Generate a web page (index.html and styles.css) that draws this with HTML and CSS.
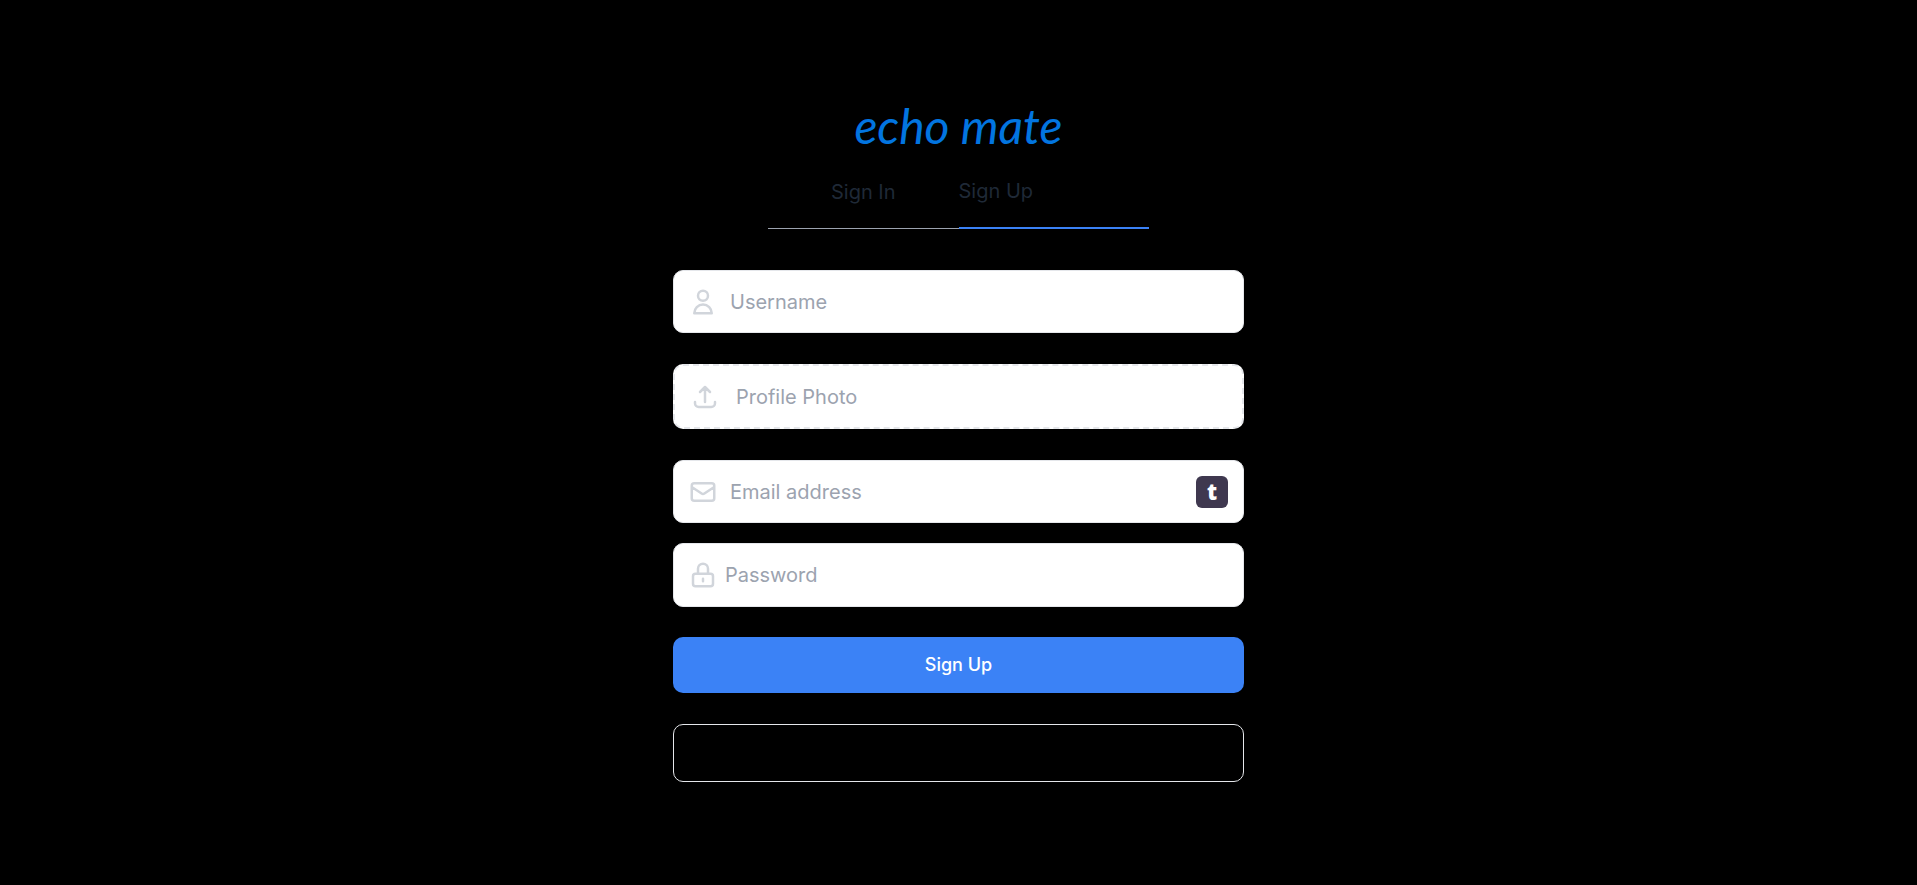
FILE: index.html
```html
<!DOCTYPE html>
<html lang="en">
<head>
<meta charset="utf-8">
<meta name="viewport" content="width=device-width, initial-scale=1">
<title>echo mate</title>
<link rel="stylesheet" href="styles.css">
</head>
<body>
<main class="page">
  <h1 class="logo">echo mate</h1>
  <nav class="tabs">
    <a class="tab" href="#signin">Sign In</a>
    <a class="tab tab-active" href="#signup" aria-current="page">Sign Up</a>
  </nav>
  <form class="form">
    <label class="field">
      <svg class="icon" viewBox="0 0 24 24" aria-hidden="true"><path d="M16 7a4 4 0 11-8 0 4 4 0 018 0zM12 14a7 7 0 00-7 7h14a7 7 0 00-7-7z"/></svg>
      <input class="input" type="text" placeholder="Username" aria-label="Username">
    </label>
    <label class="field field-upload">
      <svg class="icon" viewBox="0 0 24 24" aria-hidden="true"><path d="M4 16v1a3 3 0 003 3h10a3 3 0 003-3v-1m-4-8l-4-4m0 0L8 8m4-4v12"/></svg>
      <span class="upload-text">Profile Photo</span>
      <input class="file" type="file" accept="image/*">
    </label>
    <label class="field">
      <svg class="icon" viewBox="0 0 24 24" aria-hidden="true"><path d="M3 8l7.89 5.26a2 2 0 002.22 0L21 8M5 19h14a2 2 0 002-2V7a2 2 0 00-2-2H5a2 2 0 00-2 2v10a2 2 0 002 2z"/></svg>
      <input class="input" type="email" placeholder="Email address" aria-label="Email address">
      <span class="badge">t</span>
    </label>
    <label class="field field-password">
      <svg class="icon" viewBox="0 0 24 24" aria-hidden="true"><path d="M12 15v2m-6 4h12a2 2 0 002-2v-6a2 2 0 00-2-2H6a2 2 0 00-2 2v6a2 2 0 002 2zm10-10V7a4 4 0 00-8 0v4h8z"/></svg>
      <input class="input" type="password" placeholder="Password" aria-label="Password">
    </label>
    <button class="button" type="submit">Sign Up</button>
    <button class="button button-outline" type="button" aria-label="Other sign up options"></button>
  </form>
</main>
</body>
</html>
```
FILE: styles.css
```css
* {
  box-sizing: border-box;
}

body {
  margin: 0;
  background: #000;
  font-family: Inter, "Liberation Sans", sans-serif;
  font-size: 20px;
  line-height: 28px;
}

.page {
  display: flex;
  flex-direction: column;
  align-items: center;
  justify-content: center;
  min-height: 100vh;
  padding: 20px;
}

.logo {
  margin: 0 0 28px;
  color: #0275e0;
  font-family: Lato, sans-serif;
  font-size: 48px;
  font-style: italic;
  font-weight: 400;
  line-height: 46px;
}

.tabs {
  display: grid;
  grid-template-columns: 1fr 1fr;
  width: 100%;
  max-width: 381px;
  margin-bottom: 41px;
}

.tab {
  padding: 1px 0 22px;
  border-bottom: 1px solid #9ca3af;
  color: #1f2937;
  text-align: center;
  text-decoration: none;
}

.tab-active {
  padding-top: 0;
  border-bottom: 2px solid #3b82f6;
  text-align: left;
}

.form {
  display: flex;
  flex-direction: column;
  width: 100%;
  max-width: 571px;
}

.field {
  display: flex;
  align-items: center;
  gap: 12px;
  height: 63px;
  margin-bottom: 31px;
  padding: 0 15px 0 14px;
  border: 1px solid #e5e7eb;
  border-radius: 10px;
  background: #fff;
}

.field-upload {
  position: relative;
  gap: 16px;
  height: 65px;
  padding: 0 15px;
  border: 2px dashed #e5e7eb;
}

.field:has(.badge) {
  margin-bottom: 20px;
}

.field-password {
  gap: 7px;
  height: 64px;
  margin-bottom: 30px;
}

.icon {
  flex: none;
  width: 30px;
  height: 30px;
  fill: none;
  stroke: #d1d5db;
  stroke-width: 2;
  stroke-linecap: round;
  stroke-linejoin: round;
}

.input {
  flex: 1;
  min-width: 0;
  padding: 0;
  border: 0;
  outline: 0;
  background: transparent;
  color: #1f2937;
  font: inherit;
}

.input::placeholder {
  color: #9ca3af;
  opacity: 1;
}

.upload-text {
  color: #9ca3af;
}

.file {
  position: absolute;
  inset: 0;
  width: 100%;
  opacity: 0;
}

.badge {
  flex: none;
  width: 32px;
  height: 32px;
  border-radius: 6px;
  background: #3f384f;
  color: #fff;
  font-family: "Open Sans", sans-serif;
  font-size: 22px;
  font-weight: 800;
  line-height: 30px;
  text-align: center;
}

.button {
  height: 56px;
  margin-bottom: 31px;
  border: 0;
  border-radius: 10px;
  background: #3b82f6;
  color: #fff;
  font: inherit;
  font-size: 18px;
  font-weight: 500;
}

.button-outline {
  height: 58px;
  margin-bottom: 0;
  border: 1px solid #e5e7eb;
  background: transparent;
}
```
